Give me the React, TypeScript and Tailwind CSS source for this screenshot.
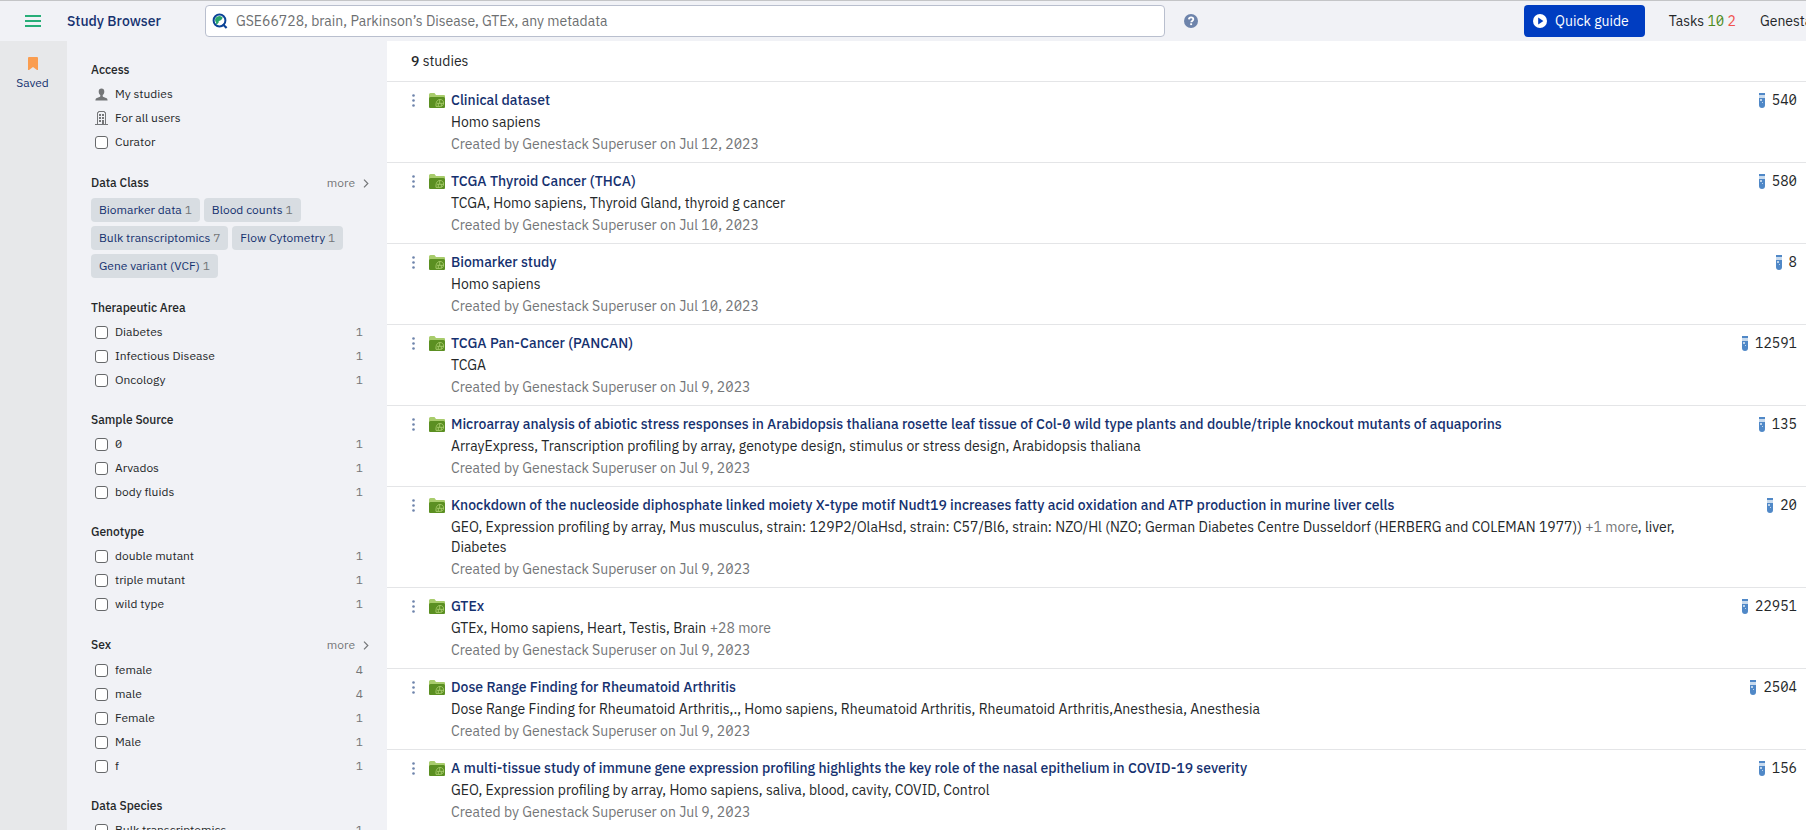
import { useState } from "react";

type FacetItem = { label: string; count?: number };
type Facet = { title: string; more?: boolean; items: FacetItem[] };
type Study = {
  title: string;
  tags: string;
  moreTags?: string;
  tagsEnd?: string;
  date: string;
  samples: number;
};

const dataClasses: FacetItem[] = [
  { label: "Biomarker data", count: 1 },
  { label: "Blood counts", count: 1 },
  { label: "Bulk transcriptomics", count: 7 },
  { label: "Flow Cytometry", count: 1 },
  { label: "Gene variant (VCF)", count: 1 },
];

const facets: Facet[] = [
  {
    title: "Therapeutic Area",
    items: [
      { label: "Diabetes", count: 1 },
      { label: "Infectious Disease", count: 1 },
      { label: "Oncology", count: 1 },
    ],
  },
  {
    title: "Sample Source",
    items: [
      { label: "0", count: 1 },
      { label: "Arvados", count: 1 },
      { label: "body fluids", count: 1 },
    ],
  },
  {
    title: "Genotype",
    items: [
      { label: "double mutant", count: 1 },
      { label: "triple mutant", count: 1 },
      { label: "wild type", count: 1 },
    ],
  },
  {
    title: "Sex",
    more: true,
    items: [
      { label: "female", count: 4 },
      { label: "male", count: 4 },
      { label: "Female", count: 1 },
      { label: "Male", count: 1 },
      { label: "f", count: 1 },
    ],
  },
  { title: "Data Species", items: [{ label: "Bulk transcriptomics", count: 1 }] },
];

const studies: Study[] = [
  { title: "Clinical dataset", tags: "Homo sapiens", date: "Jul 12, 2023", samples: 540 },
  {
    title: "TCGA Thyroid Cancer (THCA)",
    tags: "TCGA, Homo sapiens, Thyroid Gland, thyroid g cancer",
    date: "Jul 10, 2023",
    samples: 580,
  },
  { title: "Biomarker study", tags: "Homo sapiens", date: "Jul 10, 2023", samples: 8 },
  { title: "TCGA Pan-Cancer (PANCAN)", tags: "TCGA", date: "Jul 9, 2023", samples: 12591 },
  {
    title:
      "Microarray analysis of abiotic stress responses in Arabidopsis thaliana rosette leaf tissue of Col-0 wild type plants and double/triple knockout mutants of aquaporins",
    tags: "ArrayExpress, Transcription profiling by array, genotype design, stimulus or stress design, Arabidopsis thaliana",
    date: "Jul 9, 2023",
    samples: 135,
  },
  {
    title:
      "Knockdown of the nucleoside diphosphate linked moiety X-type motif Nudt19 increases fatty acid oxidation and ATP production in murine liver cells",
    tags: "GEO, Expression profiling by array, Mus musculus, strain: 129P2/OlaHsd, strain: C57/Bl6, strain: NZO/Hl (NZO; German Diabetes Centre Dusseldorf (HERBERG and COLEMAN 1977))",
    moreTags: "+1 more",
    tagsEnd: ", liver, Diabetes",
    date: "Jul 9, 2023",
    samples: 20,
  },
  {
    title: "GTEx",
    tags: "GTEx, Homo sapiens, Heart, Testis, Brain",
    moreTags: "+28 more",
    date: "Jul 9, 2023",
    samples: 22951,
  },
  {
    title: "Dose Range Finding for Rheumatoid Arthritis",
    tags: "Dose Range Finding for Rheumatoid Arthritis,., Homo sapiens, Rheumatoid Arthritis, Rheumatoid Arthritis,Anesthesia, Anesthesia",
    date: "Jul 9, 2023",
    samples: 2504,
  },
  {
    title:
      "A multi-tissue study of immune gene expression profiling highlights the key role of the nasal epithelium in COVID-19 severity",
    tags: "GEO, Expression profiling by array, Homo sapiens, saliva, blood, cavity, COVID, Control",
    date: "Jul 9, 2023",
    samples: 156,
  },
];

function SearchIcon() {
  return (
    <svg className="size-4 shrink-0" viewBox="0 0 16 16" fill="none" aria-hidden="true">
      <circle cx="7.5" cy="7.5" r="5.9" fill="#fff" stroke="#0b4397" strokeWidth="2" />
      <path d="M10.8 11.2 14.6 15" stroke="#0b4397" strokeWidth="2.2" />
      <path d="M3.4 8.6A4.2 4.2 0 0 1 10.8 4.8L9.2 7 6.6 8.2 5 11Z" fill="#27a56b" />
      <path d="M4.2 11 6.4 8.4" stroke="#27a56b" strokeWidth="1.6" />
    </svg>
  );
}

function HelpIcon() {
  return (
    <svg className="size-[14px]" viewBox="0 0 14 14" aria-hidden="true">
      <circle cx="7" cy="7" r="7" fill="#6e84ab" />
      <path
        d="M4.9 5.4C5 4.1 5.8 3.4 7.1 3.4c1.3 0 2.2.7 2.2 1.9 0 1.6-2.1 1.6-2.1 3"
        fill="none"
        stroke="#fff"
        strokeWidth="1.8"
      />
      <rect x="6.2" y="9.3" width="1.9" height="1.8" fill="#fff" />
    </svg>
  );
}

function PlayIcon() {
  return (
    <svg className="size-[14px]" viewBox="0 0 14 14" aria-hidden="true">
      <circle cx="7" cy="7" r="7" fill="#fff" />
      <path d="M5.2 3.6 10.4 7 5.2 10.4Z" fill="#003dc1" />
    </svg>
  );
}

function BookmarkIcon() {
  return (
    <svg className="h-[13px] w-[10px]" viewBox="0 0 10 13" aria-hidden="true">
      <path d="M1 0h8a1 1 0 0 1 1 1v12H9L5 10 1 13H0V1a1 1 0 0 1 1-1Z" fill="#fa9d50" />
    </svg>
  );
}

function PersonIcon() {
  return (
    <svg className="size-[13px]" viewBox="0 0 13 13" fill="#747678" aria-hidden="true">
      <path d="M6.500.5C8.300.5 9.300 1.700 9.300 3.500c0 1.600-.7 3-1.600 3.600v1c0 .6.3.8.9 1l2.400.9c1 .4 1.500 1 1.600 2.500H.4C.5 11 1 10.400 2 10l2.400-.9c.6-.2.9-.4.9-1v-1C4.400 6.500 3.700 5.100 3.700 3.500 3.700 1.700 4.700.5 6.500.5Z" />
    </svg>
  );
}

function BuildingIcon() {
  return (
    <svg className="h-[14px] w-[13px]" viewBox="0 0 13 14" aria-hidden="true">
      <path d="M2.500 13V1.500h1v-1h6v1h1V13M0 13.500h13" fill="none" stroke="#747678" />
      <path d="M4 3h2v2H4zM7 3h2v2H7zM4 6h2v2H4zM7 6h2v2H7zM4 9h2v2H4zM7 9h2v4H7z" fill="#747678" />
    </svg>
  );
}

function ChevronIcon() {
  return (
    <svg className="h-[9px] w-[6px]" viewBox="0 0 6 9" fill="none" aria-hidden="true">
      <path d="M1 .7 4.800 4.500 1 8.300" stroke="#747678" strokeWidth="1.200" />
    </svg>
  );
}

function FolderIcon() {
  return (
    <svg className="h-[15px] w-4 shrink-0" viewBox="0 0 16 15" aria-hidden="true">
      <path d="M0 2V1.500A1.500 1.500 0 0 1 1.500 0h4L7 2h8a1 1 0 0 1 1 1v4H0Z" fill="#a8cc6c" />
      <path
        d="M0 5.500A1.500 1.500 0 0 1 1.500 4h13A1.500 1.500 0 0 1 16 5.500V14a1 1 0 0 1-1 1H1a1 1 0 0 1-1-1Z"
        fill="#5b8f22"
      />
      <path
        d="M7 13.400c-.3-4 1-6.900 4-6.900 2.300 0 3.600 1.500 3.600 3.400 0 2-1.300 3.500-3.400 3.500H7M8 10.300h6.400M10.700 6.800v3.500M9.300 10.300v3M12.300 10.300v2.900"
        fill="none"
        stroke="#a8cc6c"
        strokeWidth=".9"
      />
    </svg>
  );
}

function TubeIcon() {
  return (
    <svg className="h-[15px] w-[6px]" viewBox="0 0 6 15" aria-hidden="true">
      <path d="M0 0h6v12a3 3 0 0 1-6 0Z" fill="#5088c7" />
      <path d="M0 2h6v3H0Z" fill="#c9dbee" />
      <path d="M1 6h2v2H1zM3 9h1v1H3z" fill="#bdd3ea" />
    </svg>
  );
}

function FacetHeader({ title, more }: { title: string; more?: boolean }) {
  return (
    <div className={more ? "flex h-[26px] items-center justify-between" : "flex h-6 items-center"}>
      <h2 className="font-medium">{title}</h2>
      {more && (
        <button type="button" className="mr-[18px] flex items-center gap-2 text-[#747678]">
          more
          <ChevronIcon />
        </button>
      )}
    </div>
  );
}

function CheckRow({ label, count }: FacetItem) {
  return (
    <label className="flex h-6 items-center pl-1 pr-6">
      <input
        type="checkbox"
        className="mr-[7px] size-[13px] shrink-0 appearance-none rounded-[3px] border border-[#67696b] bg-white checked:bg-[#003dc1]"
      />
      <span className="grow">{label}</span>
      {count !== undefined && <span className="text-[#747678]">{count}</span>}
    </label>
  );
}

function Filters() {
  return (
    <aside className="flex w-80 shrink-0 flex-col gap-4 bg-[#f1f2f6] pt-[17px] pl-6 text-xs">
      <section>
        <FacetHeader title="Access" />
        <a href="#my" className="flex h-6 items-center gap-[7px] pl-1">
          <PersonIcon />
          My studies
        </a>
        <a href="#all" className="flex h-6 items-center gap-[7px] pl-1">
          <BuildingIcon />
          For all users
        </a>
        <CheckRow label="Curator" />
      </section>
      <section>
        <FacetHeader title="Data Class" more />
        <div className="flex flex-wrap gap-1 py-[2px] pr-4">
          {dataClasses.map((c) => (
            <button
              key={c.label}
              type="button"
              className="h-6 rounded bg-[#d8dde2] px-2 text-[#15316f]"
            >
              {c.label} <span className="text-[#747678]">{c.count}</span>
            </button>
          ))}
        </div>
      </section>
      {facets.map((f) => (
        <section key={f.title}>
          <FacetHeader title={f.title} more={f.more} />
          {f.items.map((i) => (
            <CheckRow key={i.label} {...i} />
          ))}
        </section>
      ))}
    </aside>
  );
}

function StudyRow({ study }: { study: Study }) {
  return (
    <li className="flex items-start border-t border-[#e4e5e7] py-2 pr-[9px] pl-[25px]">
      <button type="button" aria-label="Study menu" className="flex h-5 w-[17px] shrink-0 items-center">
        <svg className="h-[13px] w-[3px]" viewBox="0 0 3 13" fill="#6e84ab" aria-hidden="true">
          <circle cx="1.5" cy="1.5" r="1.3" />
          <circle cx="1.5" cy="6.5" r="1.3" />
          <circle cx="1.5" cy="11.5" r="1.3" />
        </svg>
      </button>
      <div className="flex h-5 w-[22px] shrink-0 items-center">
        <FolderIcon />
      </div>
      <div className="flex grow basis-0 flex-col gap-[2px]">
        <a href="#study" className="self-start font-medium text-[#15316f]">
          {study.title}
        </a>
        <p>
          {study.tags}
          {study.moreTags && <span className="text-[#747678]"> {study.moreTags}</span>}
          {study.tagsEnd}
        </p>
        <p className="text-[#747678]">Created by Genestack Superuser on {study.date}</p>
      </div>
      <div className="flex w-[120px] shrink-0 items-center justify-end gap-[7px]">
        <TubeIcon />
        {study.samples}
      </div>
    </li>
  );
}

export default function App() {
  const [query, setQuery] = useState("");
  return (
    <div className="flex h-screen flex-col overflow-hidden bg-white font-['IBM_Plex_Sans',Roboto,sans-serif] text-sm/5 text-[#242729] slashed-zero">
      <header className="flex h-[41px] shrink-0 items-center overflow-hidden border-t border-[#c4c5c7] bg-[#f1f2f6] whitespace-nowrap">
        <button type="button" aria-label="Menu" className="mx-[25px] flex w-4 shrink-0 flex-col gap-[2px]">
          <span className="h-[2px] bg-[#27ae78]" />
          <span className="my-px h-[2px] bg-[#27ae78]" />
          <span className="h-[2px] bg-[#27ae78]" />
        </button>
        <h1 className="w-[138px] shrink-0 pl-px font-medium text-[#15316f]">Study Browser</h1>
        <label className="ml-px flex h-8 max-w-[960px] grow items-center gap-2 rounded border border-[#b9bfce] bg-white px-[6px]">
          <SearchIcon />
          <input
            type="text"
            aria-label="Search studies"
            value={query}
            onChange={(e) => setQuery(e.target.value)}
            placeholder="GSE66728, brain, Parkinson’s Disease, GTEx, any metadata"
            className="grow outline-none placeholder:text-[#6d6f71]"
          />
        </label>
        <button type="button" aria-label="Help" className="ml-[19px] shrink-0">
          <HelpIcon />
        </button>
        <div className="ml-auto flex shrink-0 items-center pl-4">
          <button
            type="button"
            className="flex h-8 items-center gap-2 rounded bg-[#003dc1] pr-4 pl-[9px] text-white"
          >
            <PlayIcon />
            Quick guide
          </button>
          <a href="#tasks" className="ml-6">
            Tasks <span className="text-[#4c8a21]">10</span> <span className="text-[#f0524f]">2</span>
          </a>
          <a href="#account" className="ml-6 w-[46px] overflow-hidden text-clip">
            Genestack
          </a>
        </div>
      </header>
      <div className="flex min-h-0 grow">
        <nav className="w-[67px] shrink-0 bg-[#e7e8ea] pt-4 pr-[2px]">
          <a href="#saved" className="flex flex-col items-center text-xs text-[#15316f]">
            <BookmarkIcon />
            <span className="mt-[5px]">Saved</span>
          </a>
        </nav>
        <Filters />
        <main className="min-w-0 grow">
          <p className="flex h-10 items-center pl-6">
            <span>
              <b className="font-medium">9</b> studies
            </span>
          </p>
          <ul>
            {studies.map((s) => (
              <StudyRow key={s.title} study={s} />
            ))}
          </ul>
        </main>
      </div>
    </div>
  );
}
